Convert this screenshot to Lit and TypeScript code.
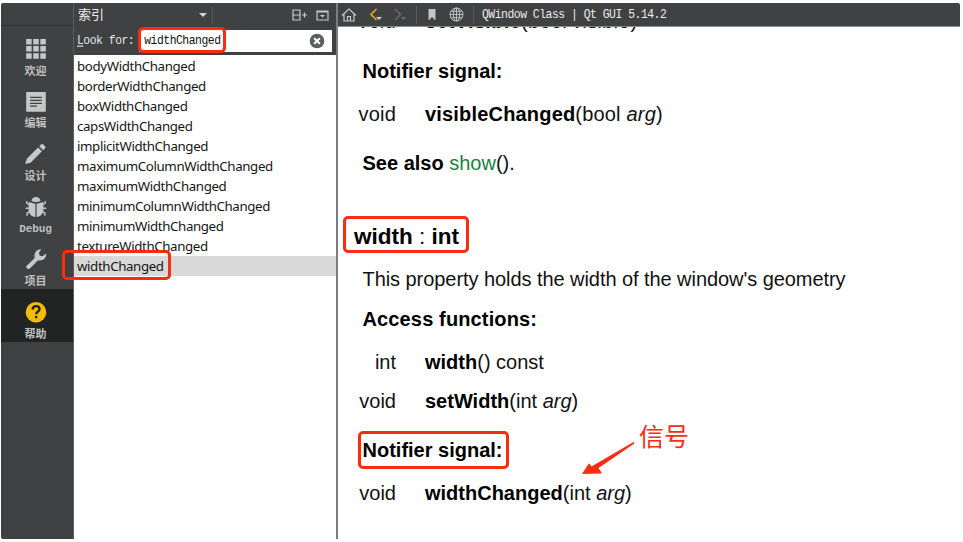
import { LitElement, html, svg, css } from "lit";
import { customElement } from "lit/decorators.js";
import { classMap } from "lit/directives/class-map.js";

const modes = [
  {
    label: "欢迎",
    icon: svg`<path d="M2 1h5.6v5.6H2zM9.2 1h5.6v5.6H9.2zM16.4 1H22v5.6h-5.6zM2 8.2h5.6v5.6H2zM9.2 8.2h5.6v5.6H9.2zM16.4 8.2H22v5.6h-5.6zM2 15.4h5.6V21H2zM9.2 15.4h5.6V21H9.2zM16.4 15.4H22V21h-5.6z"/>`,
  },
  {
    label: "编辑",
    icon: svg`<path d="M2 1h20v20H2z"/><path d="M6 6.5h12M6 9.5h12M6 12.5h12M6 15.5h7" stroke="#404142" stroke-width="1.3"/>`,
  },
  {
    label: "设计",
    icon: svg`<path d="M1 21.500l1.700-5.500L14.100 4.500l4 4L6.500 20zM15.300 3.300l1.700-1.700c.8-.8 1.700-.8 2.400-.1l1.700 1.700c.7.7.7 1.600 0 2.300l-1.800 1.800z"/>`,
  },
  {
    label: "Debug",
    icon: svg`<path d="M7.400 5C7.800 2.400 9.600 1 12 1s4.200 1.400 4.600 4c-2.700 1.400-6.500 1.400-9.200 0z"/><path d="M5.200 5.900c1.800 1.200 3.900 1.800 6.200 1.900v13.500C7 20.900 4.300 17.600 4.300 13.200c0-3 .1-5.500.9-7.300zM18.800 5.900c-1.800 1.200-3.900 1.800-6.200 1.900v13.500c4.400-.4 7.100-3.700 7.100-8.100 0-3-.1-5.500-.9-7.300z"/><path d="M5 8.500L2.700 7.500V5M4.500 12.500H1.500M5.500 16l-2.500 1.500V20M19 8.500l2.300-1V5M19.500 12.500h3M18.500 16l2.500 1.500V20" fill="none" stroke="#c6c7c7" stroke-width="1.500"/>`,
  },
  {
    label: "项目",
    icon: svg`<path d="M2.300 18.200l8.400-8C9.700 5.500 12 1.700 16.500 1.200l.7.300-2.200 3.300.8 3 3 .7 3-2.600.6.500c0 4.300-3.700 7-8.300 6.100l-8.300 8.300c-1 .9-2.200.8-3.100-.1-.9-.8-1.100-1.700-.400-2.500z"/>`,
  },
  {
    label: "帮助",
    active: true,
    icon: svg`<circle cx="12" cy="11.500" r="10.500" fill="#f4bd05"/><path d="M8.500 8.800c.1-2.500 1.600-3.700 3.600-3.700s3.500 1.200 3.500 3.100c0 2.800-3.500 2.700-3.500 5.300" fill="none" stroke="#222323" stroke-width="2.300"/><path d="M10.900 15.200h2.400v2.400h-2.400z" fill="#222323"/>`,
  },
];

@customElement("mode-bar")
export class ModeBar extends LitElement {
  static styles = css`
    :host { display: flex; flex-direction: column; width: 73px; background: #404142; box-sizing: border-box; border-right: 1px solid #5c5d5e; }
    .top { height: 23px; border-bottom: 1px solid #303132; flex: none; box-sizing: border-box; }
    .mode { height: 52.600px; flex: none; display: flex; flex-direction: column; align-items: center; box-sizing: border-box; padding: 12px 3px 0 0; color: #bfc0c0; fill: #c6c7c7; }
    .mode.active { background: #222323; }
    .label { margin-top: 4px; font: bold 11px/14px "Liberation Mono", "Noto Sans CJK SC", monospace; letter-spacing: -0.100px; }
  `;
  render() {
    return html`<div class="top"></div>
      ${modes.map(
        (m) => html`<div class=${classMap({ mode: true, active: !!m.active })}>
          <svg width="24" height="23" viewBox="0 0 24 23">${m.icon}</svg>
          <span class="label">${m.label}</span>
        </div>`
      )}`;
  }
}

const entries = [
  "bodyWidthChanged",
  "borderWidthChanged",
  "boxWidthChanged",
  "capsWidthChanged",
  "implicitWidthChanged",
  "maximumColumnWidthChanged",
  "maximumWidthChanged",
  "minimumColumnWidthChanged",
  "minimumWidthChanged",
  "textureWidthChanged",
  "widthChanged",
];

@customElement("index-panel")
export class IndexPanel extends LitElement {
  static styles = css`
    :host { display: flex; flex-direction: column; width: 262px; background: #fff; }
    .bar { height: 24px; background: #404142; display: flex; align-items: center; color: #eee; font: 13px/20px "Noto Sans CJK SC", sans-serif; padding-left: 4px; flex: none; box-sizing: border-box; }
    .bar > span:first-child { margin-top: -3px; }
    .arrow { margin-left: 94px; }
    .sep { width: 1px; height: 17px; background: #56585a; margin-left: 4px; }
    .split { margin-left: 79px; }
    .hide { margin-left: 8px; }
    .find { height: 28px; background: #404142; display: flex; align-items: center; flex: none; color: #e4e4e4; font: 11.400px/16px "Liberation Mono", monospace; letter-spacing: -0.480px; padding: 0 4px 0 3px; box-sizing: border-box; }
    .tall { display: inline-block; transform: scaleY(1.14); }
    .field { margin-left: 5px; flex: 1; height: 22px; background: #fff; color: #111; display: flex; align-items: center; justify-content: space-between; padding: 0 7px 0 5px; }
    .list { padding-top: 1px; }
    .item { height: 20px; padding-left: 3px; font: 13.300px/20px "Noto Sans", sans-serif; letter-spacing: -0.380px; color: #151515; white-space: nowrap; }
    .item.current { background: #d9d9d9; }
  `;
  render() {
    return html`<div class="bar">
        <span>索引</span>
        <svg class="arrow" width="10" height="6"><path d="M1 1h8L5 5z" fill="#d5d5d5" /></svg>
        <span class="sep"></span>
        <svg class="split" width="16" height="14" fill="none" stroke="#c8c8c8" stroke-width="1.200">
          <path d="M1 2h7v10H1zM1 7h7M10 7h5M12.500 4.500v5" />
        </svg>
        <svg class="hide" width="13" height="12" fill="none" stroke="#c8c8c8" stroke-width="1.200">
          <path d="M1 2h11v9H1zM1 3h11" /><path d="M4 6h5L6.500 8.500z" fill="#c8c8c8" stroke="none" />
        </svg>
      </div>
      <div class="find">
        <span class="tall"><u>L</u>ook for:</span>
        <div class="field">
          <span class="tall">widthChanged</span>
          <svg width="16" height="16"><circle cx="8" cy="8" r="7.300" fill="#5e5f60" /><path d="M5.200 5.200l5.600 5.600M10.800 5.200l-5.600 5.600" stroke="#fff" stroke-width="2" /></svg>
        </div>
      </div>
      <div class="list">
        ${entries.map((e) => html`<div class=${classMap({ item: true, current: e === "widthChanged" })}>${e}</div>`)}
      </div>`;
  }
}

@customElement("doc-viewer")
export class DocViewer extends LitElement {
  static styles = css`
    :host { display: flex; flex-direction: column; flex: 1; min-width: 0; background: #fff; border-left: 2px solid #7b7c7d; }
    .bar { height: 24px; box-sizing: border-box; background: #404142; border-bottom: 1px solid #8a8b8c; display: flex; align-items: center; flex: none; color: #ececec; font: 11.400px/16px "Liberation Mono", monospace; letter-spacing: -0.480px; white-space: pre; }
    .tall { display: inline-block; transform: scaleY(1.14); }
    .home { margin-left: 3px; }
    .back { margin-left: 12px; }
    .next { margin-left: 10px; }
    .sep { width: 1px; height: 18px; background: #5a5b5c; }
    .s1 { margin-left: 9px; }
    .mark { margin-left: 11px; }
    .globe { margin-left: 13px; }
    .s2 { margin: 0 8px 0 9px; }
    .page { flex: 1; overflow: hidden; color: #111; font: 20px/24px "Liberation Sans", sans-serif; }
    .row { height: 24px; padding-left: 24.500px; white-space: nowrap; }
    .fn { display: grid; grid-template-columns: 58px 1fr; column-gap: 29px; padding-left: 0; }
    .type { text-align: right; }
    .first { margin-top: -18px; margin-bottom: 26px; }
    .g0 { margin-top: 0; }
    .g15 { margin-top: 15px; }
    .g16 { margin-top: 16px; }
    .g18 { margin-top: 18px; }
    .g19 { margin-top: 19px; }
    .g25 { margin-top: 25px; }
    .title { margin-top: 50px; font-size: 22.500px; padding-left: 16px; }
    .desc { letter-spacing: -0.060px; }
    .access { letter-spacing: 0.140px; }
    .first { letter-spacing: 0.300px; }
    .visible { letter-spacing: 0.180px; }
    .link { color: #17813f; }
    b { color: #000; }
  `;
  render() {
    const fn = (gap: string, type: string, name: string, arg: string, text = "") => html`<div class="row fn ${gap}">
      <span class="type">${type}</span><span><b>${name}</b>${arg ? html`(${arg} <i>${text}</i>)` : html`() const`}</span>
    </div>`;
    return html`<div class="bar">
        <svg class="home" width="16" height="14" fill="none" stroke="#c8c8c8" stroke-width="1.200"><path d="M1 7.500L8 1l7 6.500M3 6v7h10V6M6.500 13V8.500h3V13" /></svg>
        <svg class="back" width="14" height="16" fill="none"><path d="M7.500 2L2 7.500 7.500 13" stroke="#dfb010" stroke-width="1.600" /><path d="M7 10h6l-3 3z" fill="#d0d0d0" /></svg>
        <svg class="next" width="14" height="16" fill="none"><path d="M2 2l5.500 5.500L2 13" stroke="#6c6d6e" stroke-width="1.300" /><path d="M8 10h5l-2.500 3z" fill="#6c6d6e" /></svg>
        <span class="sep s1"></span>
        <svg class="mark" width="8" height="12"><path d="M.5 0h7v11.500L4 8 .5 11.500z" fill="#c4c5c5" /></svg>
        <svg class="globe" width="15" height="15" fill="none" stroke="#bcbdbd" stroke-width="1"><circle cx="7.500" cy="7.500" r="6.500" /><ellipse cx="7.500" cy="7.500" rx="3.200" ry="6.500" /><path d="M7.500 1v13M1 7.500h13M2 4.300h11M2 10.700h11" /></svg>
        <span class="sep s2"></span><span class="tall">QWindow Class | Qt GUI 5.14.2</span>
      </div>
      <div class="page">
        ${fn("first", "void", "setVisible", "bool", "visible")}
        <div class="row g0"><b>Notifier signal:</b></div>
        ${fn("g19 visible", "void", "visibleChanged", "bool", "arg")}
        <div class="row g25"><b>See also</b> <span class="link">show</span>().</div>
        <div class="row title"><b>width</b> : <b>int</b></div>
        <div class="row g18 desc">This property holds the width of the window's geometry</div>
        <div class="row g16 access"><b>Access functions:</b></div>
        ${fn("g19", "int", "width", "")}
        ${fn("g15", "void", "setWidth", "int", "arg")}
        <div class="row g25"><b>Notifier signal:</b></div>
        ${fn("g19", "void", "widthChanged", "int", "arg")}
      </div>`;
  }
}

@customElement("app-root")
export class AppRoot extends LitElement {
  static styles = css`
    :host { display: block; position: relative; width: 963px; height: 542px; background: #fff; overflow: hidden; box-sizing: border-box; padding: 3px 3px 3px 1px; }
    .window { display: flex; height: 536px; border-radius: 2px; overflow: hidden; }
    .frame { position: absolute; box-sizing: border-box; border: 3px solid #fb2c10; border-radius: 5px; }
    .search { left: 138px; top: 27px; width: 88px; height: 26px; }
    .entry { left: 62px; top: 250px; width: 109px; height: 30px; }
    .property { left: 343px; top: 216px; width: 126px; height: 37px; }
    .signal { left: 358px; top: 431px; width: 151px; height: 38px; }
    .note { position: absolute; left: 639px; top: 418px; color: #fb2c10; font: 25px/34px "Noto Sans CJK SC", sans-serif; }
    .pointer { position: absolute; left: 580px; top: 438px; }
  `;
  render() {
    return html`<div class="window"><mode-bar></mode-bar><index-panel></index-panel><doc-viewer></doc-viewer></div>
      <div class="frame search"></div>
      <div class="frame entry"></div>
      <div class="frame property"></div>
      <div class="frame signal"></div>
      <span class="note">信号</span>
      <svg class="pointer" width="58" height="40"><path d="M53.500 4q1.500.500.500 1.800L18.500 30l3.500 5.500L2 36 9 25.300l2.500 3.200z" fill="#fb2c10" /></svg>`;
  }
}
